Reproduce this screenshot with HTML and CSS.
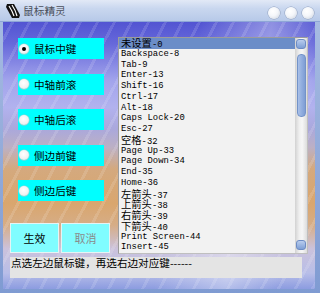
FILE: index.html
```html
<!DOCTYPE html>
<html lang="zh-CN">
<head>
    <meta charset="UTF-8">
    <title>鼠标精灵</title>
    <link rel="stylesheet" href="styles.css">
</head>
<body>
    <div class="window">
        <div class="titlebar">
            <svg class="app-icon" width="16" height="16" viewBox="0 0 16 16">
                <path d="M2 1 L9 1 L15 12 L14 15 L7 15 L1 4 Z" fill="#111"/>
                <path d="M4 3 C6 6 8 10 9 13" stroke="#fff" stroke-width="1.2" fill="none"/>
                <path d="M7 2 C9 5 11 9 12 13" stroke="#fff" stroke-width="1.2" fill="none"/>
            </svg>
            <span class="title">鼠标精灵</span>
            <div class="ctrls">
                <span class="ctrl"></span>
                <span class="ctrl"></span>
                <span class="ctrl"></span>
            </div>
        </div>
        <div class="client">
            <div class="main">
                <div class="left">
                    <div class="options">
                        <label class="opt"><span class="radio checked"></span>鼠标中键</label>
                        <label class="opt"><span class="radio"></span>中轴前滚</label>
                        <label class="opt"><span class="radio"></span>中轴后滚</label>
                        <label class="opt"><span class="radio"></span>侧边前键</label>
                        <label class="opt"><span class="radio"></span>侧边后键</label>
                    </div>
                    <div class="actions">
                        <button class="btn">生效</button>
                        <button class="btn" disabled>取消</button>
                    </div>
                </div>
                <div class="listbox">
                    <ul class="items">
                        <li class="sel"><span class="cn">未设置</span>-0</li>
                        <li>Backspace-8</li>
                        <li>Tab-9</li>
                        <li>Enter-13</li>
                        <li>Shift-16</li>
                        <li>Ctrl-17</li>
                        <li>Alt-18</li>
                        <li>Caps Lock-20</li>
                        <li>Esc-27</li>
                        <li><span class="cn">空格</span>-32</li>
                        <li>Page Up-33</li>
                        <li>Page Down-34</li>
                        <li>End-35</li>
                        <li>Home-36</li>
                        <li><span class="cn">左箭头</span>-37</li>
                        <li><span class="cn">上箭头</span>-38</li>
                        <li><span class="cn">右箭头</span>-39</li>
                        <li><span class="cn">下箭头</span>-40</li>
                        <li>Print Screen-44</li>
                        <li>Insert-45</li>
                    </ul>
                    <div class="scrollbar">
                        <span class="sb-btn"></span>
                        <span class="sb-thumb"></span>
                        <span class="sb-btn sb-down"></span>
                    </div>
                </div>
            </div>
            <div class="status">点选左边鼠标键，再选右边对应键------</div>
        </div>
    </div>
</body>
</html>
```

FILE: styles.css
```css
html, body { margin: 0; padding: 0; }
body { width: 320px; height: 293px; overflow: hidden; font-family: "Noto Sans CJK SC", "Liberation Sans", sans-serif; }

.window { width: 320px; height: 293px; display: flex; flex-direction: column; background: linear-gradient(180deg, #a9bde3, #7f9bd2); }

.titlebar { height: 22px; display: flex; align-items: center; padding-left: 5px; background: linear-gradient(180deg, #e2e9f6 0%, #c9d7ef 40%, #b7c9e8 100%); box-sizing: border-box; border-bottom: 1px solid #8ea6d6; }
.app-icon { display: block; margin-top: 1px; }
.title { margin-left: 2px; font-size: 10.7px; color: #4a4f5a; line-height: 12px; }
.ctrls { margin-left: auto; margin-right: 6px; display: flex; gap: 5px; margin-top: 5px; }
.ctrl { width: 12px; height: 12px; border-radius: 50%; background: radial-gradient(circle at 40% 35%, #ffffff 0%, #f4f6fa 45%, #c9d0dc 100%); box-shadow: 0 0 0 0.5px #8c9bb8; }

.client { flex: 1; margin: 0 5px 4px 3px; padding: 15px 0 0 7px; box-sizing: border-box;
    background:
        repeating-linear-gradient(118deg, rgba(255,255,255,0) 0 7px, rgba(255,255,255,0.13) 7px 10px, rgba(255,255,255,0) 10px 15px),
        linear-gradient(100deg, rgba(255,255,255,0) 0 55%, rgba(255,255,255,0.35) 75%, rgba(255,255,255,0) 90%),
        linear-gradient(180deg, #5254d2 0%, #6668da 8%, #a2a4ec 22%, #b2b2ee 32%, #aaa8dc 40%, #bcb0c4 47%, #d4a97e 55%, #d9a66e 68%, #d6ad86 76%, #cbc2dc 85%, #b8bee8 94%, #8c9ce0 100%); }

.main { display: flex; gap: 8px; height: 217px; }
.left { width: 100px; display: flex; flex-direction: column; justify-content: space-between; }
.options { padding: 1px 0 0 8px; }
.opt { display: flex; align-items: center; width: 86px; height: 21px; margin-bottom: 14.5px; background: #00ffff; font-size: 10.6px; color: #000; padding-left: 1px; box-sizing: border-box; }
.radio { width: 10px; height: 10px; border-radius: 50%; margin-right: 5px; position: relative; background: radial-gradient(circle at 45% 40%, #ffffff 0%, #f2f2f2 55%, #d4d4d4 100%); box-shadow: 0 0 0 0.5px #c4c4c4; }
.radio.checked::after { content: ""; position: absolute; left: 3px; top: 3px; width: 4px; height: 4px; border-radius: 50%; background: #000; }

.actions { display: flex; gap: 2px; margin-bottom: 1px; }
.btn { width: 49px; height: 30px; padding: 0; border: 1px solid #e6f4f4; background: #80fdff; font-family: "Noto Sans CJK SC", sans-serif; font-size: 11px; color: #000; }
.btn:disabled { color: #8a8a8a; }

.listbox { width: 190px; height: 217px; display: flex; box-sizing: border-box; border: 1px solid #bfbfbf; border-top-color: #9c9c9c; border-left-color: #9c9c9c; background: #f2f2f2; }
.items { flex: 1; margin: 0; padding: 0; list-style: none; font-family: "Liberation Mono", monospace; font-size: 8.85px; color: #000; }
.items li { height: 10.75px; line-height: 10.75px; padding-left: 2px; white-space: nowrap; }
.items li.sel { background: #6b8dc8; }
.cn { font-family: "Noto Sans CJK SC", sans-serif; font-size: 10.3px; line-height: 10.75px; }

.scrollbar { width: 12px; display: flex; flex-direction: column; align-items: center; background: linear-gradient(90deg, #d2d2d2 0%, #efefef 35%, #f6f6f6 60%, #dcdcdc 100%); }
.sb-btn { width: 10px; height: 10px; margin-top: 1px; border-radius: 3px; box-sizing: border-box; border: 1px solid #6d8cc4; background: linear-gradient(180deg, #b9cdee, #7e9fd6); }
.sb-thumb { width: 9px; height: 63px; margin-top: 5px; border-radius: 4px; box-sizing: border-box; border: 1px solid #7393c9; background: linear-gradient(90deg, #a9c0e8, #8eabdd 60%, #7f9dd4); }
.sb-down { margin-top: auto; margin-bottom: 3px; }

.status { margin-top: 3px; width: 292px; height: 21px; background: #e4e4e4; font-size: 10.6px; line-height: 12px; color: #000; padding-left: 1px; box-sizing: border-box; white-space: nowrap; }
```
